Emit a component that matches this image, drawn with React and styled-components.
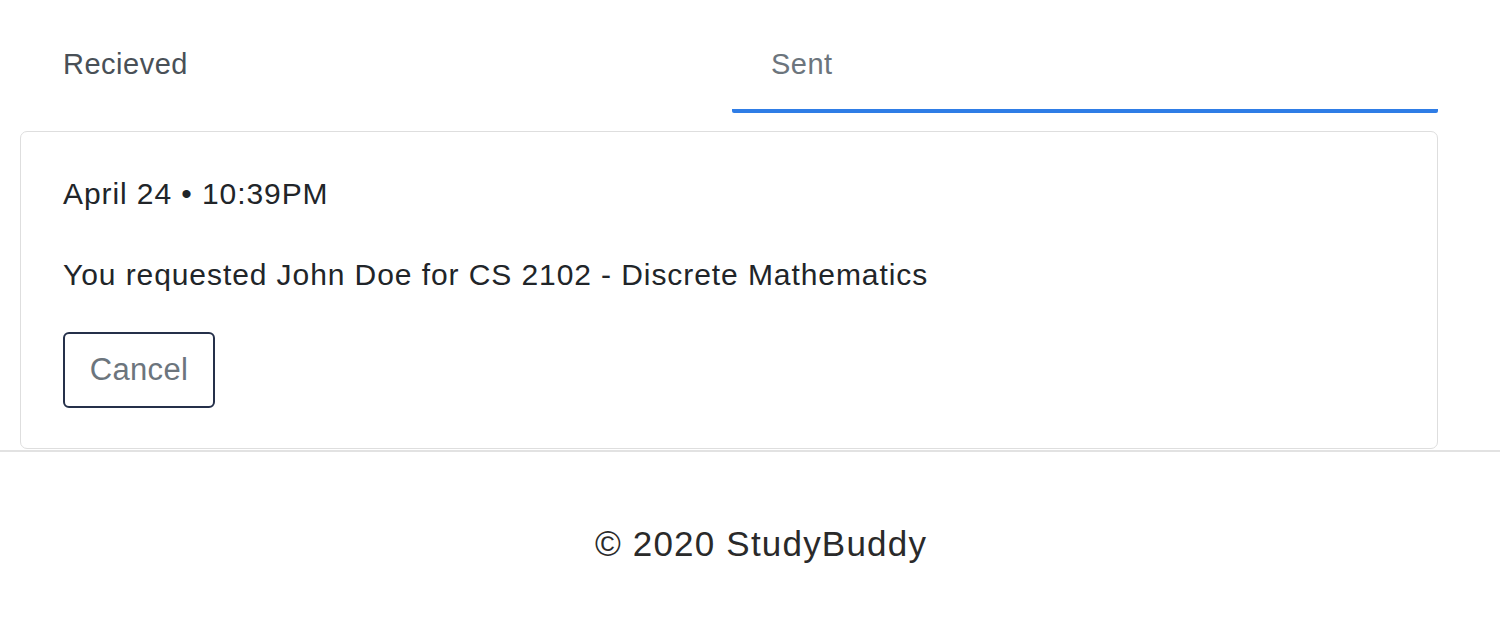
import styled, { createGlobalStyle } from "styled-components";

const GlobalStyle = createGlobalStyle`
  body {
    margin: 0;
    background: #fff;
    font-family: "Liberation Sans", Arial, sans-serif;
    color: #212529;
  }
`;

const Page = styled.div`
  width: 1500px;
`;

const Main = styled.main`
  padding-left: 20px;
  width: 1418px;
`;

const Tabs = styled.nav`
  display: flex;
`;

const Tab = styled.div`
  flex: 1;
  height: 113px;
  box-sizing: border-box;
  padding-top: 46px;
  padding-left: ${(p) => (p.$active ? "39px" : "43px")};
  margin-left: ${(p) => (p.$active ? "2px" : "0")};
  font-size: 29px;
  line-height: 36px;
  letter-spacing: 0.5px;
  color: ${(p) => (p.$active ? "#6c757d" : "#495057")};
  border-bottom: 4px solid ${(p) => (p.$active ? "#2f7de6" : "transparent")};
  border-radius: 0 0 2px 2px;
`;

const Card = styled.section`
  margin-top: 18px;
  border: 1.5px solid #dedede;
  border-radius: 7px;
  padding: 41px 42px 40px;
`;

const Line = styled.p`
  margin: 0 0 ${(p) => p.$gap || 0}px;
  font-size: 30px;
  line-height: 42px;
  letter-spacing: 0.92px;
  color: #212529;
`;

const CancelButton = styled.button`
  width: 152px;
  height: 76px;
  background: #fff;
  border: 2px solid #25304a;
  border-radius: 6px;
  font-family: "Liberation Sans", Arial, sans-serif;
  font-size: 31px;
  letter-spacing: 0.3px;
  color: #6c757d;
  padding: 0;
`;

const Footer = styled.footer`
  margin-top: 1px;
  border-top: 2px solid #e2e2e2;
  height: 178px;
  display: flex;
  justify-content: center;
  padding-top: 70px;
  padding-left: 22px;
  box-sizing: border-box;
  font-size: 35px;
  line-height: 44px;
  letter-spacing: 1.2px;
  color: #2a2a2a;
`;

const App = () => {
  return (
    <Page>
      <GlobalStyle />
      <Main>
        <Tabs>
          <Tab>Recieved</Tab>
          <Tab $active>Sent</Tab>
        </Tabs>
        <Card>
          <Line $gap={39}>April 24 • 10:39PM</Line>
          <Line $gap={36}>You requested John Doe for CS 2102 - Discrete Mathematics</Line>
          <CancelButton>Cancel</CancelButton>
        </Card>
      </Main>
      <Footer>© 2020 StudyBuddy</Footer>
    </Page>
  );
};

export default App;
